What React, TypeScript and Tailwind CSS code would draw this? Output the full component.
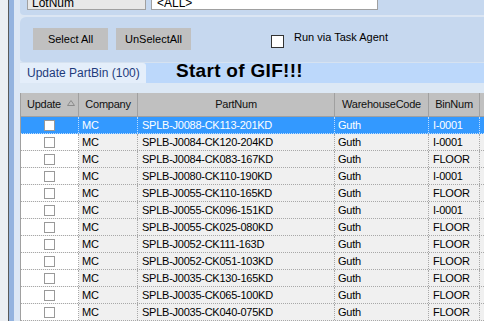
import React from "react";

const rows: [string, string][] = [
  ["SPLB-J0088-CK113-201KD", "I-0001"],
  ["SPLB-J0084-CK120-204KD", "I-0001"],
  ["SPLB-J0084-CK083-167KD", "FLOOR"],
  ["SPLB-J0080-CK110-190KD", "I-0001"],
  ["SPLB-J0055-CK110-165KD", "FLOOR"],
  ["SPLB-J0055-CK096-151KD", "I-0001"],
  ["SPLB-J0055-CK025-080KD", "FLOOR"],
  ["SPLB-J0052-CK111-163D", "FLOOR"],
  ["SPLB-J0052-CK051-103KD", "FLOOR"],
  ["SPLB-J0035-CK130-165KD", "FLOOR"],
  ["SPLB-J0035-CK065-100KD", "FLOOR"],
  ["SPLB-J0035-CK040-075KD", "FLOOR"],
];

function HeaderCell({ w, children }: { w: string; children: React.ReactNode }) {
  return (
    <div className={`${w} shrink-0 h-full flex items-center justify-center border-r border-[#a0a0a0] whitespace-nowrap`}>
      {children}
    </div>
  );
}

export default function App() {
  return (
    <div className="w-[484px] h-[321px] overflow-hidden flex font-['Liberation_Sans',Arial,sans-serif] text-black">
      <div className="w-[8px] shrink-0 bg-[#eceff3]" />
      <div className="w-[1px] shrink-0 bg-[#5a5a5a]" />
      <div className="w-[5px] shrink-0 bg-[#93b3df]" />
      <div className="w-[6px] shrink-0 bg-[#dbe7f5]" />
      <div className="flex-1 min-w-0 flex flex-col bg-[#dbe7f5]">
        {/* top clipped panel */}
        <div className="h-[15px] shrink-0 overflow-hidden flex items-end bg-[#c6d8ef] rounded-bl-[4px] pb-[5px]">
          <div className="ml-[7px] w-[119px] h-[22px] shrink-0 bg-[#e8e8e8] border border-[#a0a0a0] flex items-center pl-[4px] text-[12px] leading-none pt-[8px]">
            LotNum
          </div>
          <div className="ml-[5px] w-[227px] h-[22px] shrink-0 bg-white border border-[#a0a0a0] flex items-center pl-[5px] text-[12px] leading-none pt-[8px]">
            &lt;ALL&gt;
          </div>
        </div>
        <div className="h-[2px] shrink-0 bg-[#dce6f3]" />
        {/* buttons panel */}
        <div className="h-[45px] shrink-0 bg-[#c6d8ef] rounded-tl-[6px] rounded-bl-[4px] flex items-start pt-[11px] pl-[13px]">
          <div className="w-[75px] h-[22px] bg-[#c0c0c0] flex items-center justify-center text-[11px]">Select All</div>
          <div className="ml-[8px] w-[75px] h-[22px] bg-[#c0c0c0] flex items-center justify-center text-[11px]">UnSelectAll</div>
          <div className="ml-[80px] mt-[7px] w-[13px] h-[13px] bg-white border border-[#333333]" />
          <div className="ml-[10px] mt-[3px] text-[11px] leading-[13px]">Run via Task Agent</div>
        </div>
        {/* tab strip */}
        <div className="h-[21px] shrink-0 bg-[#bcd8fb] border-t border-[#d6e2f0] flex items-stretch">
          <div className="w-[126px] shrink-0 bg-[#e4eefa] rounded-tr-[3px] flex items-center pl-[7px] text-[12px] text-[#1e3b7c] whitespace-nowrap">
            Update PartBin (100)
          </div>
          <div className="ml-[30px] -mt-[3px] flex items-center text-[19px] font-bold tracking-[0.3px] whitespace-nowrap">
            Start of GIF!!!
          </div>
        </div>
        <div className="h-[10px] shrink-0 bg-[#dce8f5]" />
        {/* grid */}
        <div className="flex-1 border-l border-[#a0a0a0] bg-[#f0f0f0] text-[11px] tracking-[-0.25px] overflow-hidden">
          <div className="h-[24px] flex bg-[#c0c0c0] border-b border-[#a0a0a0] text-[#111]">
            <HeaderCell w="w-[58px] pl-[3px]">
              <span>Update</span>
              <svg width="8" height="6" viewBox="0 0 8 6" className="ml-[6px] mb-[3px]">
                <path d="M4 0.5 L7.5 5.5 L0.5 5.5 Z" fill="none" stroke="#8a8a8a" strokeWidth="1" />
              </svg>
            </HeaderCell>
            <HeaderCell w="w-[59px]">Company</HeaderCell>
            <HeaderCell w="w-[197px]">PartNum</HeaderCell>
            <HeaderCell w="w-[94px]">WarehouseCode</HeaderCell>
            <HeaderCell w="w-[51px]">BinNum</HeaderCell>
            <div className="flex-1" />
          </div>
          {rows.map(([part, bin], i) => {
            const sel = i === 0;
            const cellBorder = sel ? "border-[#bcdcff]" : "border-[#a8a8a8]";
            return (
              <div
                key={i}
                className={`h-[17px] flex border-b border-dotted ${cellBorder} ${sel ? "bg-[#3399ff] text-white" : "text-black"}`}
              >
                <div className={`w-[58px] shrink-0 flex items-center justify-center border-r border-dotted ${cellBorder} ${sel ? "" : "bg-white"}`}>
                  <div className="w-[11px] h-[11px] bg-white border border-[#999999]" />
                </div>
                <div className={`w-[59px] shrink-0 flex items-center pl-[3px] border-r border-dotted ${cellBorder}`}>MC</div>
                <div className={`w-[197px] shrink-0 flex items-center pl-[4px] border-r border-dotted ${cellBorder} whitespace-nowrap`}>{part}</div>
                <div className={`w-[94px] shrink-0 flex items-center pl-[3px] border-r border-dotted ${cellBorder}`}>Guth</div>
                <div className={`w-[51px] shrink-0 flex items-center pl-[4px] border-r border-dotted ${cellBorder}`}>{bin}</div>
                <div className="flex-1" />
              </div>
            );
          })}
        </div>
      </div>
    </div>
  );
}
